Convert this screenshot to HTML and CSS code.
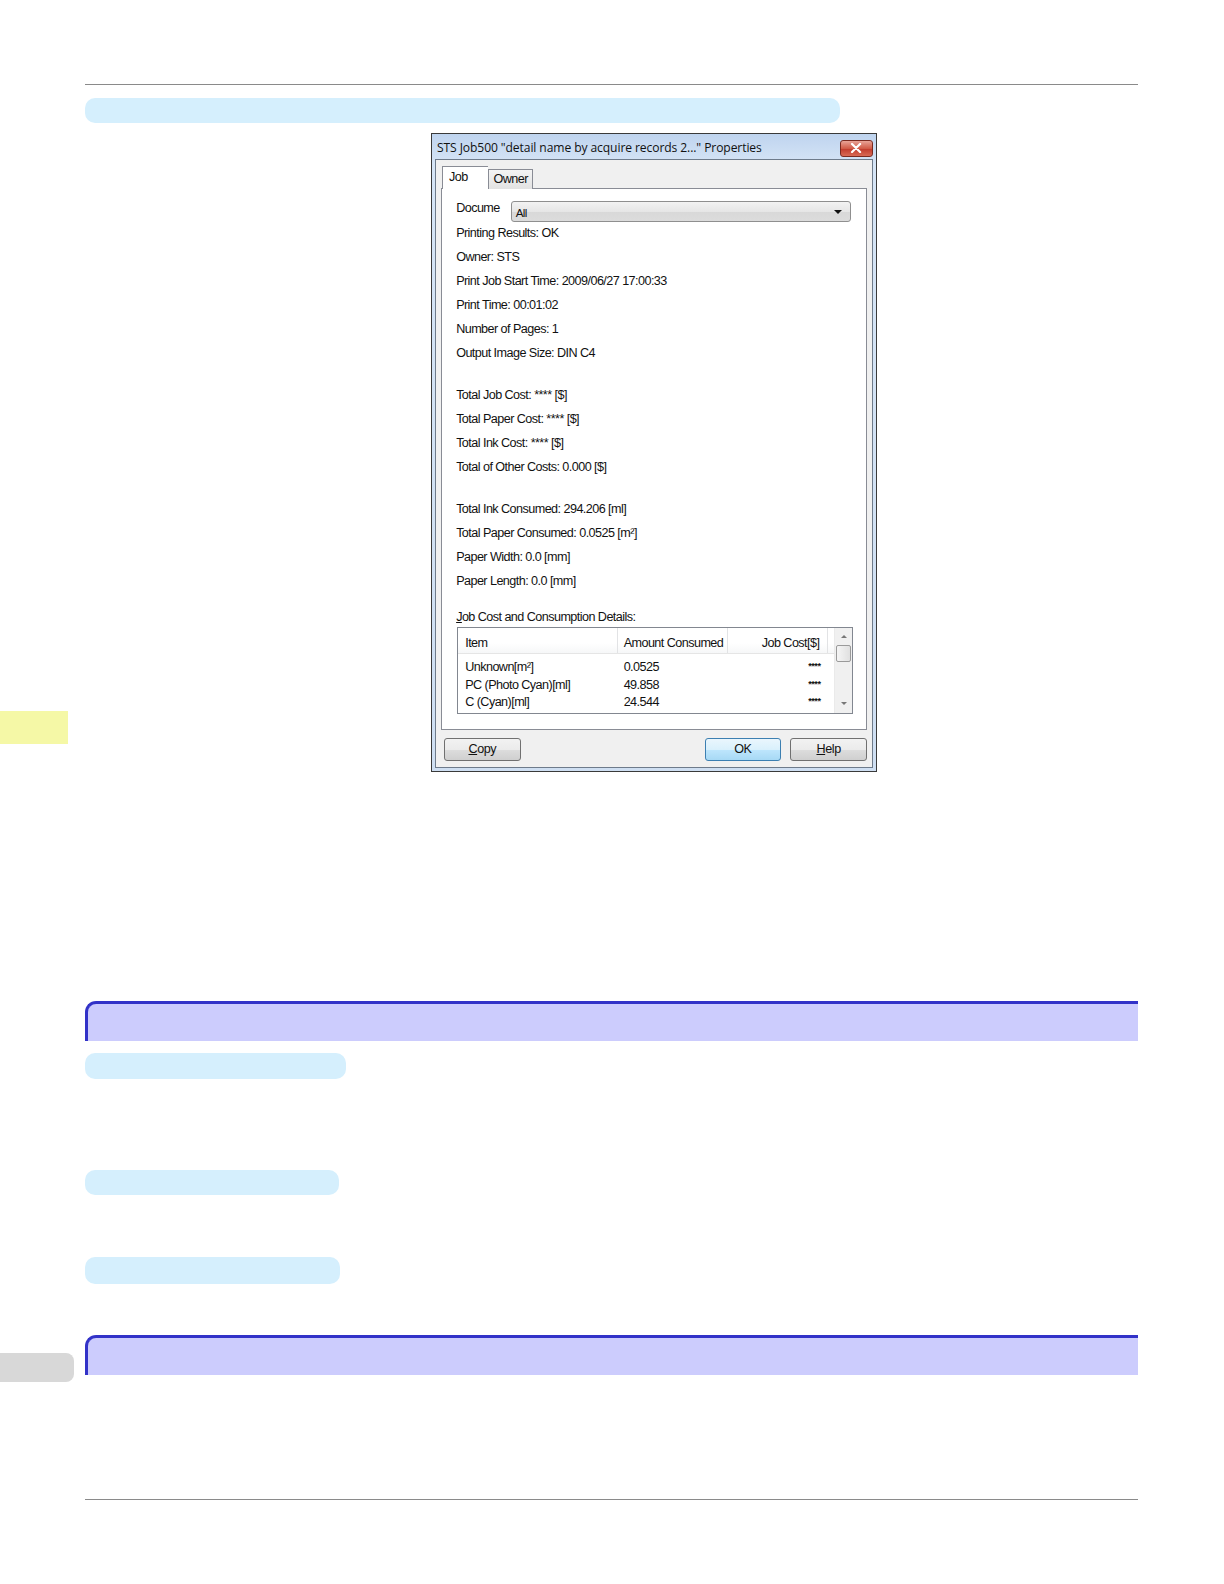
FILE: index.html
```html
<!DOCTYPE html>
<html>
<head>
<meta charset="utf-8">
<link rel="stylesheet" href="styles.css">
</head>
<body>
<div class="side-tab side-tab-yellow"></div>
<div class="side-tab side-tab-gray"></div>
<div class="page">
  <div class="rule rule-top"></div>
  <div class="pill pill-wide"></div>

  <div class="dialog">
    <div class="titlebar">
      <span class="title">STS Job500 "detail name by acquire records 2..." Properties</span>
      <span class="close-btn">
        <svg width="12" height="10" viewBox="0 0 12 10"><path d="M2 1 L10 9 M10 1 L2 9" stroke="#fff" stroke-width="2.2" stroke-linecap="round"/></svg>
      </span>
    </div>
    <div class="client">
      <div class="tabs">
        <div class="tab tab-active">Job</div>
        <div class="tab">Owner</div>
      </div>
      <div class="panel">
        <div class="doc-row">
          <span class="doc-label">Docume</span>
          <div class="combo"><span class="combo-text">All</span><span class="combo-arrow"></span></div>
        </div>
        <div class="group group-first">
          <div class="line">Printing Results: OK</div>
          <div class="line">Owner: STS</div>
          <div class="line">Print Job Start Time: 2009/06/27 17:00:33</div>
          <div class="line">Print Time: 00:01:02</div>
          <div class="line">Number of Pages: 1</div>
          <div class="line">Output Image Size: DIN C4</div>
        </div>
        <div class="group">
          <div class="line">Total Job Cost: **** [$]</div>
          <div class="line">Total Paper Cost: **** [$]</div>
          <div class="line">Total Ink Cost: **** [$]</div>
          <div class="line">Total of Other Costs: 0.000 [$]</div>
        </div>
        <div class="group">
          <div class="line">Total Ink Consumed: 294.206 [ml]</div>
          <div class="line">Total Paper Consumed: 0.0525 [m²]</div>
          <div class="line">Paper Width: 0.0 [mm]</div>
          <div class="line">Paper Length: 0.0 [mm]</div>
        </div>
        <div class="details-label"><u>J</u>ob Cost and Consumption Details:</div>
        <div class="listview">
          <div class="lv-main">
            <div class="lv-header">
              <div class="lv-h lv-c1">Item</div>
              <div class="lv-h lv-c2">Amount Consumed</div>
              <div class="lv-h lv-c3">Job Cost[$]</div>
            </div>
            <div class="lv-row"><div class="lv-c1">Unknown[m²]</div><div class="lv-c2">0.0525</div><div class="lv-c3">****</div></div>
            <div class="lv-row"><div class="lv-c1">PC (Photo Cyan)[ml]</div><div class="lv-c2">49.858</div><div class="lv-c3">****</div></div>
            <div class="lv-row"><div class="lv-c1">C (Cyan)[ml]</div><div class="lv-c2">24.544</div><div class="lv-c3">****</div></div>
          </div>
          <div class="scrollbar">
            <div class="sb-arrow sb-up"></div>
            <div class="sb-thumb"></div>
            <div class="sb-track"></div>
            <div class="sb-arrow sb-down"></div>
          </div>
        </div>
      </div>
      <div class="buttons">
        <div class="btn"><u>C</u>opy</div>
        <div class="btn-spacer"></div>
        <div class="btn btn-default">OK</div>
        <div class="btn"><u>H</u>elp</div>
      </div>
    </div>
  </div>

  <div class="section-bar section-bar-1"></div>
  <div class="pill pill-a"></div>
  <div class="pill pill-b"></div>
  <div class="pill pill-c"></div>
  <div class="section-bar section-bar-2"></div>
  <div class="rule rule-bottom"></div>
</div>
</body>
</html>
```
FILE: styles.css
```css
html {
  margin: 0;
  padding: 0;
  overflow: hidden;
  background: #ffffff;
}
body {
  margin: 0;
  padding: 0;
  position: relative;
  width: 1224px;
  height: 1584px;
  overflow: hidden;
  zoom: 1.0093;
  font-family: "Liberation Sans", Arial, sans-serif;
}
.page {
  padding-left: 84px;
  width: 1044px;
  padding-top: 83px;
}
.rule {
  height: 1px;
  background: #8a8a8a;
  width: 1044px;
}
.pill {
  background: #d5effd;
  border-radius: 10px;
}
.pill-wide {
  margin-top: 13px;
  width: 748px;
  height: 25px;
}
.side-tab {
  position: absolute;
  left: 0;
}
.side-tab-yellow {
  top: 704px;
  width: 67px;
  height: 33px;
  background: #f5f8a6;
}
.side-tab-gray {
  top: 1341px;
  width: 73px;
  height: 28px;
  background: #d8d8d8;
  border-radius: 0 8px 8px 0;
}

/* dialog */
.dialog {
  margin-top: 10px;
  margin-left: 343px;
  width: 440px;
  height: 631px;
  border: 1px solid #3a3a3a;
  background: linear-gradient(#bfd4ef, #d6e5f6 30px, #cfdff2);
  display: flex;
  flex-direction: column;
  font-family: "Liberation Sans", Arial, sans-serif;
  color: #111;
}
.titlebar {
  height: 25px;
  display: flex;
  align-items: center;
  padding-left: 5px;
  padding-right: 3px;
  justify-content: space-between;
}
.title {
  font-family: "Open Sans", "Noto Sans", sans-serif;
  font-size: 12px;
  letter-spacing: -0.1px;
  color: #111;
  margin-top: 2px;
  white-space: nowrap;
}
.close-btn {
  width: 33px;
  height: 17px;
  border: 1px solid #7a2a20;
  border-radius: 3px;
  background: linear-gradient(#e8a397, #d15b47 50%, #c0392b 51%, #d86a55);
  display: flex;
  align-items: center;
  justify-content: center;
  margin-top: 3px;
  box-sizing: border-box;
}
.client {
  flex: 1;
  margin: 0 3px 3px 3px;
  border: 1px solid #6e7b8b;
  background: #f0f0f0;
  padding: 6px 5px 0 5px;
  display: flex;
  flex-direction: column;
}
.tabs {
  display: flex;
  align-items: flex-end;
  height: 22px;
  margin-bottom: -1px;
  position: relative;
  z-index: 1;
  padding-left: 1px;
}
.tab {
  font-size: 12.5px;
  letter-spacing: -0.55px;
  height: 19px;
  line-height: 19px;
  padding: 0 4px;
  border: 1px solid #898c95;
  border-bottom: none;
  background: linear-gradient(#f4f4f4, #e2e2e2);
  box-sizing: border-box;
}
.tab-active {
  height: 22px;
  line-height: 20px;
  width: 46px;
  padding-left: 6px;
  background: #ffffff;
  border-right: none;
}
.panel {
  height: 537px;
  box-sizing: border-box;
  border: 1px solid #898c95;
  background: #ffffff;
  padding: 12px 15px 0 14px;
  font-size: 12.5px;
  letter-spacing: -0.55px;
}
.doc-row {
  display: flex;
  align-items: flex-start;
  height: 21px;
}
.doc-label {
  width: 54px;
  line-height: 14px;
  overflow: hidden;
  white-space: nowrap;
}
.combo {
  flex: 1;
  height: 21px;
  box-sizing: border-box;
  border: 1px solid #8f8f8f;
  border-radius: 3px;
  background: linear-gradient(#f3f3f3, #e6e6e6 50%, #d8d8d8 51%, #dcdcdc);
  display: flex;
  align-items: center;
  justify-content: space-between;
  padding: 3px 8px 0 4px;
}
.combo-text {
  font-size: 11.5px;
}
.combo-arrow {
  width: 0;
  height: 0;
  border-left: 4px solid transparent;
  border-right: 4px solid transparent;
  border-top: 4px solid #111;
  margin-top: -2px;
}
.group {
  margin-top: 18px;
}
.group-first {
  margin-top: -1px;
}
.line {
  height: 23.8px;
  line-height: 23.8px;
  white-space: nowrap;
}
.details-label {
  margin-top: 16px;
  line-height: 14px;
}
.listview {
  margin-top: 3px;
  margin-left: 1px;
  width: 392px;
  height: 86px;
  box-sizing: border-box;
  border: 1px solid #828790;
  display: flex;
}
.lv-main {
  flex: 1;
  display: flex;
  flex-direction: column;
}
.lv-header {
  display: flex;
  height: 25px;
  border-bottom: 1px solid #e5e5e5;
  background: linear-gradient(#ffffff, #ffffff 60%, #f6f7f8);
  margin-bottom: 5px;
}
.lv-h {
  line-height: 20px;
  padding-top: 5px;
  border-right: 1px solid #e2e3e5;
}
.lv-row {
  display: flex;
  height: 17.5px;
  line-height: 17.5px;
}
.lv-c1 {
  width: 158px;
  padding-left: 7px;
  box-sizing: border-box;
  white-space: nowrap;
}
.lv-c2 {
  width: 109px;
  padding-left: 6px;
  box-sizing: border-box;
  white-space: nowrap;
}
.lv-c3 {
  width: 99px;
  text-align: right;
  padding-right: 7px;
  box-sizing: border-box;
  white-space: nowrap;
}
.lv-row .lv-c3 {
  font-size: 9px;
  letter-spacing: -0.5px;
  line-height: 14px;
  font-weight: bold;
}
.scrollbar {
  width: 17px;
  display: flex;
  flex-direction: column;
  background: #f0f0f0;
  border-left: 1px solid #eaeaea;
}
.sb-arrow {
  height: 17px;
  position: relative;
}
.sb-up::after, .sb-down::after {
  content: "";
  position: absolute;
  left: 6px;
  top: 7px;
  border-left: 3px solid transparent;
  border-right: 3px solid transparent;
}
.sb-up::after {
  border-bottom: 3px solid #777;
}
.sb-down::after {
  border-top: 3px solid #777;
}
.sb-thumb {
  height: 17px;
  margin: 0 1px;
  border: 1px solid #9a9a9a;
  border-radius: 2px;
  background: linear-gradient(90deg, #f5f5f5, #e0e0e0);
  box-sizing: border-box;
}
.sb-track {
  flex: 1;
}
.buttons {
  display: flex;
  align-items: center;
  gap: 9px;
  padding: 8px 0 0 3px;
}
.btn-spacer {
  flex: 1;
}
.btn {
  width: 76px;
  height: 23px;
  box-sizing: border-box;
  border: 1px solid #707070;
  border-radius: 3px;
  background: linear-gradient(#f2f2f2, #ebebeb 50%, #dddddd 51%, #cfcfcf);
  font-size: 12.5px;
  letter-spacing: -0.4px;
  display: flex;
  align-items: center;
  justify-content: center;
}
.btn-default {
  border-color: #3c7fb1;
  background: linear-gradient(#eaf6fd, #d9f0fc 50%, #bee6fd 51%, #a7d9f5);
}

/* section bars */
.section-bar {
  height: 39px;
  box-sizing: border-box;
  border-top: 3px solid #3232c8;
  border-left: 3px solid #3232c8;
  border-top-left-radius: 11px;
  background: #ccccfd;
}
.section-bar-1 {
  margin-top: 227px;
}
.pill-a {
  margin-top: 12px;
  width: 259px;
  height: 26px;
}
.pill-b {
  margin-top: 90px;
  width: 252px;
  height: 25px;
}
.pill-c {
  margin-top: 62px;
  width: 253px;
  height: 26px;
}
.section-bar-2 {
  margin-top: 51px;
}
.rule-bottom {
  margin-top: 123px;
}
```
